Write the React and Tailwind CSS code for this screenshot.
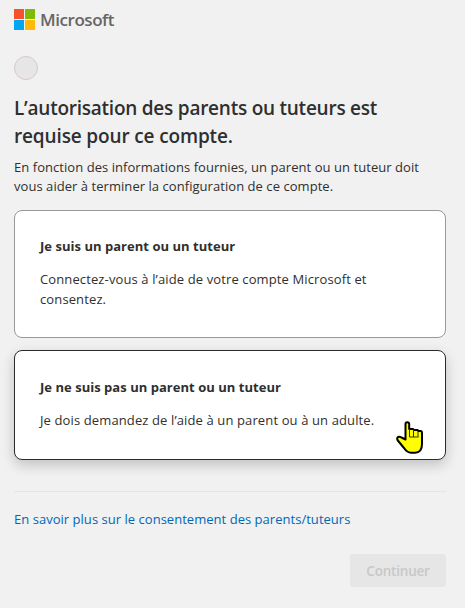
import React from 'react';

const MicrosoftLogo = () => (
  <div className="flex h-[21px] items-center gap-[5px]">
    <svg className="h-[21px] w-[21px]" viewBox="0 0 21 21" aria-hidden="true">
      <path fill="#f65128" d="M0 0h10v10H0z" />
      <path fill="#80bb03" d="M11 0h10v10H11z" />
      <path fill="#02a5f0" d="M0 11h10v10H0z" />
      <path fill="#ffb906" d="M11 11h10v10H11z" />
    </svg>
    <span className="text-[17px] leading-[21px] font-semibold tracking-[-0.45px] whitespace-nowrap text-[#666]">Microsoft</span>
  </div>
);

const HandCursor = () => (
  <svg
    className="pointer-events-none absolute top-[70px] left-[381px] h-[34px] w-[28px]"
    viewBox="0 0 28 34"
    aria-hidden="true"
  >
    <path
      d="M9.500 18.500V3Q9.500 1.200 11.300 1.200T13.200 3V8H17L18 9H21.500L22.500 10H24.500Q26 10 26 12V23C26 28 24 31.700 19 31.700H15C12 31.700 10 30 8 27L1.800 19.500Q.5 17 2 16Q3.500 15.300 5.500 16.500Z"
      fill="#ff0"
      stroke="#000"
      strokeWidth="2"
      strokeLinejoin="round"
    />
    <path d="M13.500 8v8h9M17.500 9v7M22 10v6" fill="none" stroke="#333300" strokeWidth="1" />
  </svg>
);

const OptionCard = ({ title, lines, selected, children }) => (
  <button
    type="button"
    aria-pressed={selected}
    className={
      selected
        ? 'relative block h-[110px] w-full rounded-lg border border-[#2b2b2b] bg-white px-[25px] pt-[26px] text-left shadow-[0_5px_13px_rgba(0,0,0,0.2)]'
        : 'relative block h-[128px] w-full rounded-lg border border-[#999] bg-white px-[25px] pt-[25px] text-left'
    }
  >
    <div className="flex h-full flex-col justify-start">
      <span className="text-[13px] leading-5 font-bold tracking-[0.03px] whitespace-nowrap">{title}</span>
      <span className="mt-[13px] text-[13px] leading-5 tracking-[0.12px] whitespace-nowrap">
        {lines.map((line) => (
          <span key={line} className="block">{line}</span>
        ))}
      </span>
    </div>
    {children}
  </button>
);

const App = () => {
  return (
    <main className="flex h-[608px] w-[465px] flex-col overflow-hidden bg-[#f1f1f1] pt-[9px] pr-[19px] pl-[14px] font-['Open_Sans','Noto_Sans',sans-serif] text-[#2f2f2f]">
      <MicrosoftLogo />
      <div className="mt-[26px] h-6 w-6 rounded-full border border-[#d8c8cc] bg-[#e6e6e6]" />

      <h1 className="mt-[14px] text-[19px] leading-7 font-semibold whitespace-nowrap">
        <span className="block tracking-[-0.24px]">L’autorisation des parents ou tuteurs est</span>
        <span className="block tracking-[-0.14px]">requise pour ce compte.</span>
      </h1>
      <p className="mt-2 text-[13px] leading-[19px] tracking-[0.05px] whitespace-nowrap">
        <span className="block">En fonction des informations fournies, un parent ou un tuteur doit</span>
        <span className="block">vous aider à terminer la configuration de ce compte.</span>
      </p>

      <div className="mt-[14px] flex flex-col gap-3">
        <OptionCard
          title="Je suis un parent ou un tuteur"
          lines={['Connectez-vous à l’aide de votre compte Microsoft et', 'consentez.']}
        />
        <OptionCard
          selected
          title="Je ne suis pas un parent ou un tuteur"
          lines={['Je dois demandez de l’aide à un parent ou à un adulte.']}
        >
          <HandCursor />
        </OptionCard>
      </div>

      <hr className="mt-[31px] border-[#e5e5e5]" />
      <a href="#" className="mt-[17px] self-start text-[13px] leading-5 tracking-[0.03px] whitespace-nowrap text-[#0067b8]">
        En savoir plus sur le consentement des parents/tuteurs
      </a>
      <button
        type="button"
        disabled
        className="mt-[25px] h-[33px] w-24 self-end rounded-[3px] bg-[#e6e6e6] pt-0.5 text-[13.5px] font-semibold tracking-[-0.2px] text-[#c8c8c8]"
      >
        Continuer
      </button>
    </main>
  );
};

export default App;
